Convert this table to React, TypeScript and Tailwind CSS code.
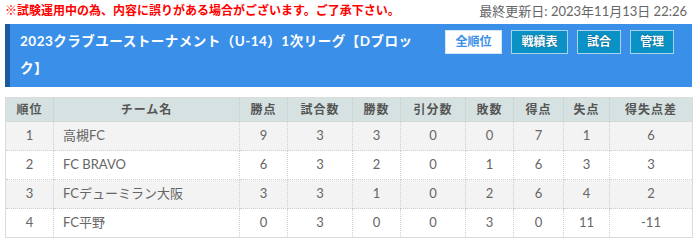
const rows = [
  { rank: 1, team: '高槻FC', pts: 9, played: 3, win: 3, draw: 0, lose: 0, gf: 7, ga: 1, gd: '6' },
  { rank: 2, team: 'FC BRAVO', pts: 6, played: 3, win: 2, draw: 0, lose: 1, gf: 6, ga: 3, gd: '3' },
  { rank: 3, team: 'FCデューミラン大阪', pts: 3, played: 3, win: 1, draw: 0, lose: 2, gf: 6, ga: 4, gd: '2' },
  { rank: 4, team: 'FC平野', pts: 0, played: 3, win: 0, draw: 0, lose: 3, gf: 0, ga: 11, gd: '-11' },
];

const cols = [
  { label: '順位', w: 'w-[48px]' },
  { label: 'チーム名', w: 'w-[186px]' },
  { label: '勝点', w: 'w-[48px]' },
  { label: '試合数', w: 'w-[65px]' },
  { label: '勝数', w: 'w-[48px]' },
  { label: '引分数', w: 'w-[65px]' },
  { label: '敗数', w: 'w-[48px]' },
  { label: '得点', w: 'w-[50px]' },
  { label: '失点', w: 'w-[46px]' },
  { label: '得失点差', w: 'w-[83px]' },
];

export default function App() {
  return (
    <div className="w-[700px] h-[244px] bg-white px-[5px] font-['Lato','Noto_Sans_CJK_JP',sans-serif] overflow-hidden">
      <div className="flex justify-between items-center h-[22px] pr-[8px]">
        <p className="text-[12px] font-bold text-[#ff0000] leading-none">※試験運用中の為、内容に誤りがある場合がございます。ご了承下さい。</p>
        <p className="text-[13px] text-[#666] leading-none">最終更新日: 2023年11月13日 22:26</p>
      </div>

      <div className="mt-[2px] w-[687px] h-[63px] bg-[#3a8fe9] border-l-[5px] border-[#1c5a9e] flex items-start pl-[10px] pr-[18px]">
        <h2 className="flex-1 text-white font-bold text-[13.5px] leading-[27px] pt-[4px] pr-[12px] tracking-[0.5px]">
          2023クラブユーストーナメント（U-14）1次リーグ【Dブロック】
        </h2>
        <div className="flex gap-[9px] pt-[6px]">
          <button className="w-[57px] h-[24px] bg-white border border-[#d6e6f5] text-[#3a8fe9] text-[12px] font-bold">全順位</button>
          <button className="w-[57px] h-[24px] bg-[#0a92c6] border border-[#a9d3ea] text-white text-[12px] font-bold [text-shadow:0_0_2px_rgba(0,0,0,0.4)]">戦績表</button>
          <button className="w-[44px] h-[24px] bg-[#0a92c6] border border-[#a9d3ea] text-white text-[12px] font-bold [text-shadow:0_0_2px_rgba(0,0,0,0.4)]">試合</button>
          <button className="w-[44px] h-[24px] bg-[#0a92c6] border border-[#a9d3ea] text-white text-[12px] font-bold [text-shadow:0_0_2px_rgba(0,0,0,0.4)]">管理</button>
        </div>
      </div>

      <table className="mt-[10px] w-[687px] table-fixed border-collapse border border-[#dcdcdc] text-[13px] text-[#666]">
        <thead>
          <tr className="bg-[#d6e1e1] h-[24px]">
            {cols.map((c) => (
              <th key={c.label} className={`${c.w} font-bold text-[12px] text-[#555] border-x border-dotted border-[#c4cccc] tracking-[1px]`}>
                {c.label}
              </th>
            ))}
          </tr>
        </thead>
        <tbody>
          {rows.map((r, i) => (
            <tr key={r.rank} className={`h-[29px] ${i % 2 === 0 ? 'bg-[#f3f3f3]' : 'bg-white'}`}>
              <td className="text-center border border-dotted border-[#cfcfcf]">{r.rank}</td>
              <td className="pl-[9px] border border-dotted border-[#cfcfcf]">{r.team}</td>
              <td className="text-center border border-dotted border-[#cfcfcf]">{r.pts}</td>
              <td className="text-center border border-dotted border-[#cfcfcf]">{r.played}</td>
              <td className="text-center border border-dotted border-[#cfcfcf]">{r.win}</td>
              <td className="text-center border border-dotted border-[#cfcfcf]">{r.draw}</td>
              <td className="text-center border border-dotted border-[#cfcfcf]">{r.lose}</td>
              <td className="text-center border border-dotted border-[#cfcfcf]">{r.gf}</td>
              <td className="text-center border border-dotted border-[#cfcfcf]">{r.ga}</td>
              <td className="text-center border border-dotted border-[#cfcfcf]">{r.gd}</td>
            </tr>
          ))}
        </tbody>
      </table>
    </div>
  );
}
